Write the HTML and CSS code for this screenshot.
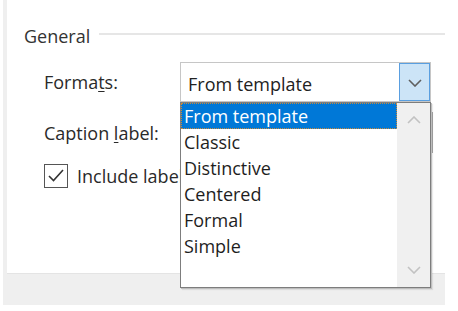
FILE: index.html
```html
<!DOCTYPE html>
<html>
<head>
<meta charset="utf-8">
<link rel="stylesheet" href="styles.css">
</head>
<body>
<div class="frame">
  <div class="panel">
    <div class="group-head">
      <span class="group-title">General</span>
      <span class="group-line"></span>
    </div>
    <div class="row row-formats">
      <span class="label">Forma<u>t</u>s:</span>
      <div class="combo">
        <span class="combo-text">From template</span>
        <span class="combo-btn">
          <svg width="14" height="8" viewBox="0 0 14 8"><polyline points="1,1 7,7 13,1" fill="none" stroke="#5f5f5f" stroke-width="1.6"/></svg>
        </span>
      </div>
    </div>
    <div class="row row-caption">
      <span class="label">Caption <u>l</u>abel:</span>
      <div class="combo combo-wide"></div>
    </div>
    <div class="row row-check">
      <span class="checkbox">
        <svg width="22" height="22" viewBox="0 0 22 22"><polyline points="4,11 8.5,15.5 18,5" fill="none" stroke="#333" stroke-width="1.6"/></svg>
      </span>
      <span class="check-label">Include label</span>
    </div>

    <div class="dropdown">
      <ul class="list">
        <li class="item selected">From template</li>
        <li class="item">Classic</li>
        <li class="item">Distinctive</li>
        <li class="item">Centered</li>
        <li class="item">Formal</li>
        <li class="item">Simple</li>
      </ul>
      <div class="scrollbar">
        <span class="arrow">
          <svg width="14" height="8" viewBox="0 0 14 8"><polyline points="1,7 7,1 13,7" fill="none" stroke="#c2c2c2" stroke-width="1.6"/></svg>
        </span>
        <span class="arrow">
          <svg width="14" height="8" viewBox="0 0 14 8"><polyline points="1,1 7,7 13,1" fill="none" stroke="#c2c2c2" stroke-width="1.6"/></svg>
        </span>
      </div>
    </div>
  </div>
</div>
</body>
</html>
```
FILE: styles.css
```css
html, body {
  margin: 0;
  padding: 0;
  background: #ffffff;
}

body {
  width: 458px;
  height: 311px;
  overflow: hidden;
  font-family: "Open Sans", "Noto Sans", sans-serif;
  font-size: 18px;
  line-height: 26px;
  color: #222222;
}

.frame {
  margin-left: 3px;
  width: 442px;
  height: 305px;
  box-sizing: border-box;
  padding-left: 4px;
  background: #efefef;
}

.panel {
  position: relative;
  height: 274px;
  box-sizing: border-box;
  background: #ffffff;
  border-bottom: 1px solid #e4e4e4;
  padding-top: 23px;
}

.group-head {
  display: flex;
  align-items: flex-start;
  padding-left: 17px;
}

.group-title {
  color: #333333;
}

.group-line {
  flex: 1;
  height: 2px;
  margin-top: 10px;
  margin-left: 9px;
  background: #e6e6e6;
}

.row {
  display: flex;
  align-items: center;
  padding-left: 37px;
}

.row-formats {
  margin-top: 13px;
}

.row-caption {
  margin-top: 10px;
}

.row-check {
  margin-top: 10px;
}

.label {
  width: 136px;
  color: #2a2a2a;
}

.label u {
  text-decoration-thickness: 1px;
  text-underline-offset: 2px;
}

.combo {
  display: flex;
  align-items: stretch;
  width: 251px;
  height: 40px;
  box-sizing: border-box;
  border: 1px solid #c6c6c6;
  background: #ffffff;
}

.combo-wide {
  width: 253px;
  height: 41px;
  border-color: #a9a9a9;
}

.combo-text {
  flex: 1;
  padding-left: 7px;
  padding-top: 8px;
  box-sizing: border-box;
  color: #222222;
}

.combo-btn {
  width: 31px;
  box-sizing: border-box;
  background: #cce4f7;
  border: 1px solid #5a9fe0;
  display: flex;
  align-items: center;
  justify-content: center;
  padding-top: 1px;
}

.checkbox {
  width: 24px;
  height: 24px;
  box-sizing: border-box;
  border: 1px solid #555555;
  display: flex;
  align-items: center;
  justify-content: center;
  background: #ffffff;
}

.check-label {
  margin-left: 9px;
  width: 103px;
  overflow: hidden;
  white-space: nowrap;
  color: #2a2a2a;
}

.dropdown {
  position: absolute;
  left: 173px;
  top: 102px;
  width: 251px;
  height: 186px;
  box-sizing: border-box;
  border: 1px solid #7d7d7d;
  background: #ffffff;
  display: flex;
  box-shadow: 1px 1px 0 #bdbdbd, 2px 2px 1px rgba(0,0,0,0.08);
}

.list {
  list-style: none;
  margin: 0;
  padding: 0;
  flex: 1;
}

.item {
  height: 26px;
  padding-left: 3px;
  color: #1e1e1e;
  white-space: nowrap;
}

.item.selected {
  background: #0078d7;
  color: #ffffff;
  outline: 1px dotted #c98a3a;
  outline-offset: -1px;
}

.scrollbar {
  width: 33px;
  background: #f0f0f0;
  display: flex;
  flex-direction: column;
  justify-content: space-between;
}

.arrow {
  height: 34px;
  display: flex;
  align-items: center;
  justify-content: center;
}
```
